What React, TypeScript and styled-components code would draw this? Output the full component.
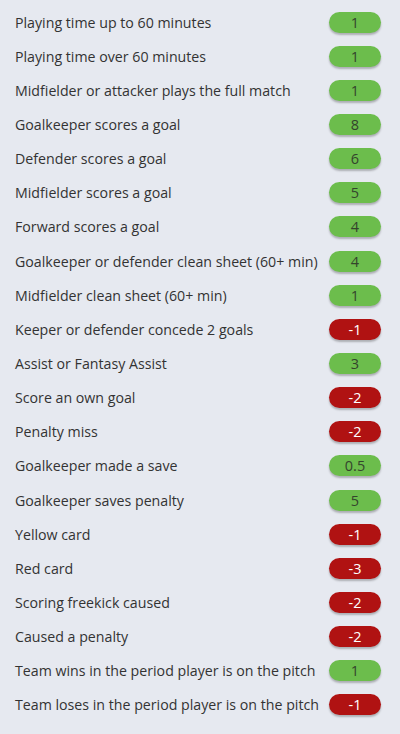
import React from 'react';
import styled, { createGlobalStyle } from 'styled-components';

const GlobalStyle = createGlobalStyle`
  body {
    margin: 0;
    background: #e6e9f0;
    font-family: 'Open Sans', 'Liberation Sans', sans-serif;
  }
`;

const List = styled.div`
  width: 400px;
  padding: 5px 19px 0 15px;
  box-sizing: border-box;
`;

const Row = styled.div`
  display: flex;
  align-items: center;
  justify-content: space-between;
  height: 34.15px;
`;

const Label = styled.span`
  font-size: 14.2px;
  color: #333;
`;

const Pill = styled.span<{ negative: boolean }>`
  width: 52px;
  height: 21px;
  border-radius: 11px;
  display: flex;
  align-items: center;
  justify-content: center;
  font-size: 14.5px;
  background: ${({ negative }) => (negative ? '#b01212' : '#6cbd4c')};
  color: ${({ negative }) => (negative ? '#fff' : '#34442c')};
  box-shadow: 0 2px 2px rgba(0, 0, 0, 0.25);
`;

const rules: [string, number][] = [
  ['Playing time up to 60 minutes', 1],
  ['Playing time over 60 minutes', 1],
  ['Midfielder or attacker plays the full match', 1],
  ['Goalkeeper scores a goal', 8],
  ['Defender scores a goal', 6],
  ['Midfielder scores a goal', 5],
  ['Forward scores a goal', 4],
  ['Goalkeeper or defender clean sheet (60+ min)', 4],
  ['Midfielder clean sheet (60+ min)', 1],
  ['Keeper or defender concede 2 goals', -1],
  ['Assist or Fantasy Assist', 3],
  ['Score an own goal', -2],
  ['Penalty miss', -2],
  ['Goalkeeper made a save', 0.5],
  ['Goalkeeper saves penalty', 5],
  ['Yellow card', -1],
  ['Red card', -3],
  ['Scoring freekick caused', -2],
  ['Caused a penalty', -2],
  ['Team wins in the period player is on the pitch', 1],
  ['Team loses in the period player is on the pitch', -1],
];

export default function App() {
  return (
    <>
      <GlobalStyle />
      <List>
        {rules.map(([label, pts]) => (
          <Row key={label}>
            <Label>{label}</Label>
            <Pill negative={pts < 0}>{pts}</Pill>
          </Row>
        ))}
      </List>
    </>
  );
}
